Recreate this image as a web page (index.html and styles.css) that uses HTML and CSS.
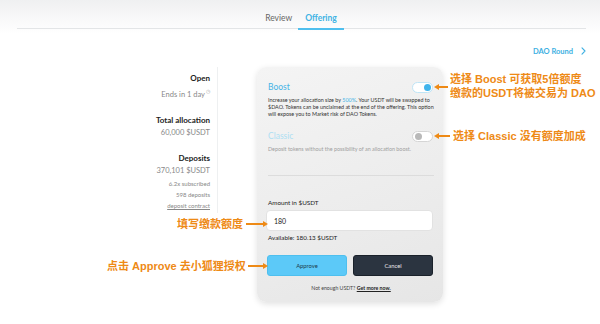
FILE: index.html
```html
<!DOCTYPE html>
<html>
<head>
<meta charset="utf-8">
<link rel="stylesheet" href="styles.css">
</head>
<body>
<div class="page">
  <div class="tabs">
    <div class="tab">Review</div>
    <div class="tab active">Offering</div>
  </div>
  <div class="round-row">
    <span class="round">DAO Round</span>
    <svg class="chev" width="5" height="8" viewBox="0 0 5 8"><path d="M1 0.8 L4 4 L1 7.2" fill="none" stroke="#3eb0e2" stroke-width="1.1" stroke-linecap="round" stroke-linejoin="round"/></svg>
  </div>
  <div class="content">
    <div class="stats">
      <div class="stat">
        <div class="st-title">Open</div>
        <div class="st-val">Ends in 1 day<sup class="clock">◷</sup></div>
      </div>
      <div class="stat">
        <div class="st-title">Total allocation</div>
        <div class="st-val">60,000 $USDT</div>
      </div>
      <div class="stat">
        <div class="st-title">Deposits</div>
        <div class="st-val">370,101 $USDT</div>
        <div class="st-small first">6.2x subscribed</div>
        <div class="st-small">598 deposits</div>
        <div class="st-small link">deposit contract</div>
      </div>
    </div>
    <div class="card">
      <div class="opt-head">
        <span class="opt-title">Boost</span>
        <span class="toggle on"><span class="knob"></span></span>
      </div>
      <p class="opt-desc dark">Increase your allocation size by <span class="hl">500%</span>. Your USDT will be swapped to $DAO. Tokens can be unclaimed at the end of the offering. This option will expose you to Market risk of DAO Tokens.</p>
      <div class="opt-head classic">
        <span class="opt-title light">Classic</span>
        <span class="toggle"><span class="knob"></span></span>
      </div>
      <p class="opt-desc">Deposit tokens without the possibility of an allocation boost.</p>
      <div class="divider"></div>
      <div class="amt-label">Amount in $USDT</div>
      <div class="input">180</div>
      <div class="avail">Available: 180.13 $USDT</div>
      <div class="buttons">
        <div class="btn approve">Approve</div>
        <div class="btn cancel">Cancel</div>
      </div>
      <div class="more">Not enough USDT? <span class="more-link">Get more now.</span></div>
    </div>
  </div>

  <div class="note n1">
    <span class="arrow-left"></span>
    <div class="note-text">选择 Boost 可获取5倍额度<br>缴款的USDT将被交易为 DAO</div>
  </div>
  <div class="note n2">
    <span class="arrow-left"></span>
    <div class="note-text">选择 Classic 没有额度加成</div>
  </div>
  <div class="note n3">
    <div class="note-text">填写缴款额度</div>
    <span class="arrow-right"></span>
  </div>
  <div class="note n4">
    <div class="note-text">点击 Approve 去小狐狸授权</div>
    <span class="arrow-right"></span>
  </div>
</div>
</body>
</html>
```

FILE: styles.css
```css
* { box-sizing: border-box; }
html, body { margin: 0; padding: 0; }
body {
  width: 600px;
  height: 324px;
  overflow: hidden;
  font-family: Lato, "Open Sans", "Noto Sans", sans-serif;
  background: linear-gradient(#eff0f1 0px, #f8f8f9 18px, #ffffff 34px);
  color: #333;
}
.page {
  position: relative;
  width: 600px;
  height: 324px;
  padding-left: 17px;
}
.tabs {
  width: 569px;
  height: 29px;
  border-bottom: 1px solid #e3e5e7;
  display: flex;
  justify-content: center;
}
.tab {
  font-size: 8.5px;
  line-height: 10px;
  color: #666;
  padding: 13px 6px 0;
  height: 29px;
}
.tab.active {
  color: #3fb3e4;
  font-weight: 700;
  border-bottom: 2px solid #4fbfee;
  padding-left: 7px;
  padding-right: 7px;
  height: 30px;
  margin-bottom: -1px;
}
.round-row {
  width: 569px;
  display: flex;
  justify-content: flex-end;
  align-items: center;
  gap: 8px;
  margin-top: 17px;
  height: 10px;
  padding-right: 0;
}
.round {
  font-size: 7.5px;
  font-weight: 700;
  color: #3eb0e2;
}
.chev { display: block; }
.content {
  display: flex;
  margin-top: 11px;
}
.stats {
  width: 201px;
  border-right: 1px solid #eef0f1;
  padding-right: 7px;
  padding-top: 6px;
  text-align: right;
  height: 146px;
}
.stat { margin-bottom: 15px; }
.st-title {
  font-size: 8px;
  font-weight: 700;
  color: #222;
  line-height: 10px;
}
.st-val {
  font-size: 7.5px;
  color: #888;
  line-height: 10px;
  margin-top: 3px;
}
.clock {
  font-size: 5px;
  color: #aaa;
  vertical-align: 4px;
  margin-left: 1px;
}
.st-small {
  font-size: 6px;
  color: #888;
  line-height: 11px;
}
.st-small.first { margin-top: 2px; }
.link { text-decoration: underline; }
.card {
  width: 186px;
  height: 235px;
  margin-left: 39px;
  border-radius: 9px;
  background: linear-gradient(160deg, #f4f4f4 0%, #ececec 60%, #e6e6e6 100%);
  box-shadow: 0 2px 6px rgba(0,0,0,0.12);
  padding: 13px 9px 0 11px;
}
.opt-head {
  display: flex;
  justify-content: space-between;
  align-items: center;
  height: 14px;
  padding-right: 1px;
}
.opt-title {
  font-size: 8.5px;
  color: #46b4e6;
}
.opt-title.light { color: #aedff3; }
.toggle {
  width: 21px;
  height: 11px;
  border-radius: 6px;
  background: #fff;
  border: 1px solid #d5d5d5;
  position: relative;
  display: block;
}
.toggle .knob {
  position: absolute;
  top: 1px;
  left: 2px;
  width: 7px;
  height: 7px;
  border-radius: 50%;
  background: #b9b9b9;
}
.toggle.on { border-color: #bfe5f6; }
.toggle.on .knob {
  left: auto;
  right: 1px;
  background: #3fb4ec;
}
.opt-desc {
  margin: 3px 0 0;
  font-size: 5.4px;
  line-height: 7px;
  color: #a0a0a0;
  width: 166px;
}
.opt-desc.dark { color: #333; }
.hl { color: #46b4e6; }
.classic { margin-top: 11px; }
.divider {
  height: 1px;
  background: #dcdcdc;
  margin-top: 22px;
}
.amt-label {
  font-size: 6.3px;
  line-height: 8px;
  color: #222;
  margin-top: 23px;
}
.input {
  margin-top: 3px;
  margin-left: -2px;
  width: 167px;
  height: 21px;
  background: #fff;
  border-radius: 4px;
  border: 1px solid #e2e2e2;
  font-size: 7px;
  line-height: 8px;
  color: #222;
  padding: 6px 7px;
}
.avail {
  font-size: 6.3px;
  line-height: 8px;
  color: #222;
  margin-top: 3px;
}
.buttons {
  display: flex;
  gap: 6px;
  margin-top: 13px;
  margin-left: -1px;
}
.btn {
  width: 80px;
  height: 21px;
  border-radius: 3px;
  font-size: 5.8px;
  display: flex;
  align-items: center;
  justify-content: center;
}
.approve {
  background: #5cc9f8;
  color: #1d3a4a;
  border: 1px solid #4ebfee;
}
.cancel {
  background: #2b3440;
  color: #e8e8e8;
  border: 1px solid #1a212a;
}
.more {
  font-size: 5.2px;
  line-height: 7px;
  color: #444;
  text-align: center;
  margin-top: 9px;
}
.more-link {
  text-decoration: underline;
  font-weight: 700;
  color: #222;
}

/* annotations overlaid on the screenshot */
.note {
  position: absolute;
  display: flex;
  align-items: center;
}
.note-text {
  font-family: "Liberation Sans", "Noto Sans CJK SC", sans-serif;
  font-weight: 700;
  font-size: 11px;
  line-height: 14px;
  color: #ee8a16;
  white-space: nowrap;
}
.arrow-left, .arrow-right {
  position: relative;
  display: block;
  height: 1.5px;
  background: #ee8a16;
}
.arrow-left::before {
  content: "";
  position: absolute;
  left: -4px;
  top: -2.5px;
  border-top: 3.3px solid transparent;
  border-bottom: 3.3px solid transparent;
  border-right: 5.5px solid #ee8a16;
}
.arrow-right::after {
  content: "";
  position: absolute;
  right: -4px;
  top: -2.5px;
  border-top: 3.3px solid transparent;
  border-bottom: 3.3px solid transparent;
  border-left: 5.5px solid #ee8a16;
}
.n1 { left: 438px; top: 72px; }
.n1 .arrow-left { width: 10px; margin-right: 2px; margin-top: 2px; }
.n2 { left: 438px; top: 129px; }
.n2 .arrow-left { width: 12px; margin-right: 3px; }
.n3 { left: 177px; top: 217px; }
.n3 .arrow-right { width: 18px; margin-left: 3px; }
.n4 { left: 107px; top: 259px; }
.n4 .arrow-right { width: 16px; margin-left: 2px; }
```
